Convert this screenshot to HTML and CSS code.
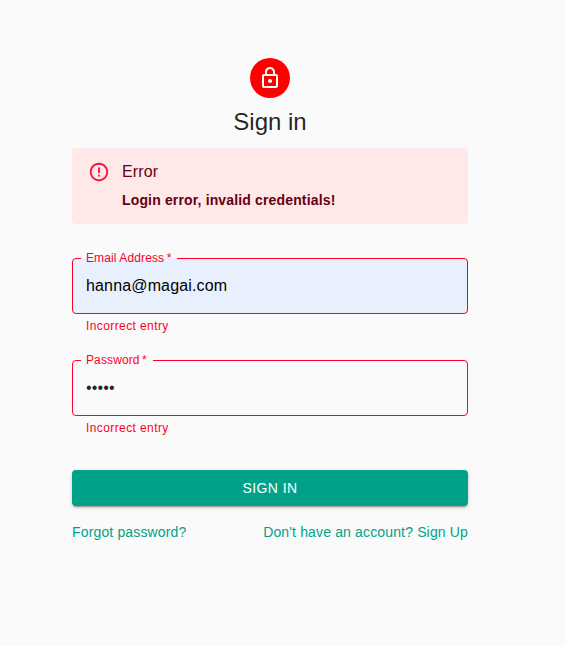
FILE: index.html
```html
<!DOCTYPE html>
<html lang="en">
<head>
<meta charset="utf-8">
<title>Sign in</title>
<link rel="stylesheet" href="styles.css">
</head>
<body>
<main class="container">
  <div class="avatar">
    <svg viewBox="0 0 24 24"><path d="M12 17c1.100 0 2-.9 2-2s-.9-2-2-2-2 .9-2 2 .9 2 2 2zm6-9h-1V6c0-2.760-2.240-5-5-5S7 3.240 7 6v2H6c-1.100 0-2 .9-2 2v10c0 1.100.9 2 2 2h12c1.100 0 2-.9 2-2V10c0-1.100-.9-2-2-2zM8.900 6c0-1.710 1.390-3.100 3.100-3.100s3.100 1.390 3.100 3.100v2H8.900V6zM18 20H6V10h12v10z"/></svg>
  </div>
  <h1 class="title">Sign in</h1>
  <div class="alert" role="alert">
    <svg class="alert-icon" viewBox="0 0 24 24"><path d="M11 15h2v2h-2zm0-8h2v6h-2zm.99-5C6.470 2 2 6.480 2 12s4.470 10 9.990 10C17.520 22 22 17.520 22 12S17.520 2 11.990 2zM12 20c-4.420 0-8-3.580-8-8s3.580-8 8-8 8 3.580 8 8-3.580 8-8 8z"/></svg>
    <div class="alert-message">
      <div class="alert-title">Error</div>
      <strong>Login error, invalid credentials!</strong>
    </div>
  </div>
  <form class="form">
    <div class="field">
      <fieldset class="outline filled">
        <legend>Email Address&thinsp;*</legend>
        <div class="value">hanna@magai.com</div>
      </fieldset>
      <p class="helper">Incorrect entry</p>
    </div>
    <div class="field">
      <fieldset class="outline">
        <legend>Password&thinsp;*</legend>
        <div class="value">•••••</div>
      </fieldset>
      <p class="helper">Incorrect entry</p>
    </div>
    <button class="submit" type="button">SIGN IN</button>
    <div class="links"><a>Forgot password?</a><a>Don't have an account? Sign Up</a></div>
  </form>
</main>
</body>
</html>
```
FILE: styles.css
```css
* { box-sizing: border-box; }
body {
  margin: 0;
  background: #fafafa;
  color: rgba(0, 0, 0, .87);
  font-family: "Liberation Sans", Arial, sans-serif;
}
.container {
  width: 396px;
  margin: 58px 0 0 72px;
  display: flex;
  flex-direction: column;
}
.avatar {
  width: 40px;
  height: 40px;
  border-radius: 50%;
  background: #f00;
  align-self: center;
  display: flex;
  align-items: center;
  justify-content: center;
}
.avatar svg { width: 24px; height: 24px; fill: #fafafa; }
.title {
  margin: 8px 0 10px;
  font-size: 24px;
  font-weight: 400;
  line-height: 32px;
  text-align: center;
}
.alert {
  height: 76px;
  display: flex;
  padding: 6px 16px;
  border-radius: 4px;
  background: #ffe9e8;
  color: #66000f;
  font-size: 14px;
  letter-spacing: .15px;
}
.alert-icon { width: 22px; height: 22px; margin: 7px 12px 0 0; fill: #ff0f3c; }
.alert-message { padding: 6px 0 8px; line-height: 20px; }
.alert-title { font-size: 16px; line-height: 24px; margin-bottom: 6px; }
.form { margin-top: 26px; }
.field { height: 86px; margin-bottom: 16px; }
.outline {
  margin: 0;
  min-width: 0;
  height: 64px;
  border: 1px solid #ff0025;
  border-radius: 4px;
  padding: 0 13px;
}
.filled { background: #e8f0fe; }
.filled .value { color: #000; }
.outline legend {
  margin-left: -5px;
  padding: 0 6px 0 5px;
  font-size: 12px;
  line-height: 16px;
  letter-spacing: .113px;
  color: #ff0025;
}
.value { font-size: 16px; line-height: 24px; padding-top: 8px; letter-spacing: .15px; }
.helper {
  margin: 4px 14px 0;
  font-size: 12px;
  line-height: 16px;
  letter-spacing: .4px;
  color: #ff0025;
}
.submit {
  display: block;
  width: 100%;
  height: 36px;
  margin-top: 32px;
  border: 0;
  border-radius: 4px;
  background: #00a189;
  box-shadow: 0 3px 1px -2px rgba(0, 0, 0, .2), 0 2px 2px 0 rgba(0, 0, 0, .14), 0 1px 5px 0 rgba(0, 0, 0, .12);
  color: #fff;
  font: 14px "Liberation Sans", Arial, sans-serif;
  letter-spacing: .4px;
}
.links {
  display: flex;
  justify-content: space-between;
  margin-top: 16px;
  font-size: 14px;
  line-height: 20px;
  letter-spacing: .15px;
  color: #00a189;
}
```
